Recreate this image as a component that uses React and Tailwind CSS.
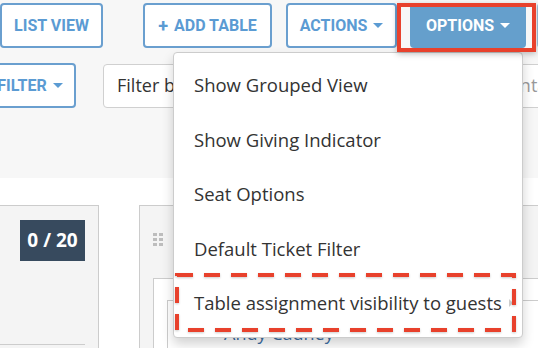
import React from 'react';

const Caret = ({ className = '' }) => (
  <span className={`inline-block w-0 h-0 border-x-[5px] border-x-transparent border-t-[5px] ${className}`} />
);

const OutlineButton = ({ children, className = '' }) => (
  <button
    className={`h-[45px] shrink-0 flex items-center justify-center gap-[6px] rounded-[4px] border-2 border-[#6a9fcf] bg-white text-[16px] font-bold text-[#5b9bd3] ${className}`}
    style={{ fontFamily: 'Roboto, "Liberation Sans", sans-serif' }}
  >
    {children}
  </button>
);

const menuItems = [
  'Show Grouped View',
  'Show Giving Indicator',
  'Seat Options',
  'Default Ticket Filter',
  'Table assignment visibility to guests',
];

export default function App() {
  return (
    <div
      className="relative w-[538px] h-[348px] overflow-hidden bg-white"
      style={{ fontFamily: '"Open Sans", "Liberation Sans", sans-serif' }}
    >
      {/* toolbar area */}
      <div className="h-[178px] bg-[#f7f7f7] pt-[3px]">
        <div className="flex items-center">
          <OutlineButton className="w-[103px]">LIST VIEW</OutlineButton>
          <OutlineButton className="w-[129px] ml-[40px]">
            <span className="text-[18px] leading-none">+</span>ADD TABLE
          </OutlineButton>
          <OutlineButton className="w-[111px] ml-[14px]">
            ACTIONS <Caret className="border-t-[#5b9bd3]" />
          </OutlineButton>
          <button
            className="h-[45px] w-[116px] ml-[13px] shrink-0 flex items-center justify-center gap-[6px] rounded-[4px] bg-[#659fcc] text-[16px] font-bold text-white"
            style={{ fontFamily: 'Roboto, "Liberation Sans", sans-serif' }}
          >
            OPTIONS <Caret className="border-t-white" />
          </button>
          <div className="h-[45px] w-[20px] ml-[11px] shrink-0 rounded-[4px] border-2 border-[#9fbfdc] bg-white" />
        </div>

        <div className="flex items-center mt-[15px]">
          <OutlineButton className="w-[92px] -ml-[16px]">
            FILTER <Caret className="border-t-[#5b9bd3]" />
          </OutlineButton>
          <div className="h-[44px] w-[311px] ml-[27px] shrink-0 flex items-center pl-[13px] rounded-[4px] border border-[#d0d0d0] bg-white text-[18px] text-[#333]">
            Filter by Table
          </div>
          <div className="h-[44px] w-[200px] ml-[8px] shrink-0 flex items-center pl-[13px] rounded-[4px] border border-[#d0d0d0] bg-white text-[18px] text-[#999] whitespace-nowrap">
            Search Contacts
          </div>
        </div>
      </div>

      {/* table cards */}
      <div className="flex items-start mt-[27px]">
        <div className="w-[100px] h-[160px] -ml-px shrink-0 border border-[#cccccc] bg-[#f4f4f4] pt-[14px]">
          <div className="ml-[20px] w-[65px] h-[41px] flex items-center justify-center bg-[#374a5e] text-white text-[19px] font-bold">
            0 / 20
          </div>
          <div className="mt-[83px] w-[85px] border-t border-[#cccccc]" />
        </div>

        <div className="ml-[40px] w-[420px] h-[160px] shrink-0 border border-[#cccccc] bg-[#f4f4f4] pl-[13px] pt-[27px]">
          <div className="grid grid-cols-2 gap-[2px] w-[10px]">
            {[0, 1, 2, 3, 4, 5].map((i) => (
              <span key={i} className="w-[4px] h-[3px] bg-[#bdbdbd]" />
            ))}
          </div>
          <div className="mt-[32px] h-[100px] border border-[#cccccc] bg-white pl-[13px] pt-[21px]">
            <div className="h-[80px] border border-[#cccccc] bg-white pl-[56px] pt-[19px] text-[18px] text-[#3d6ea3]">
              Andy Cadney
            </div>
          </div>
        </div>
      </div>

      {/* dropdown menu */}
      <div className="absolute left-[173px] top-[52px] w-[350px] h-[286px] rounded-[4px] border border-[#cccccc] bg-white pt-[5px] shadow-[0_6px_12px_rgba(0,0,0,0.18)]">
        {menuItems.map((label, i) => (
          <div
            key={label}
            className="relative h-[54.5px] flex items-center pl-[20px] text-[18.5px] text-[#333] whitespace-nowrap"
          >
            {label}
            {i === menuItems.length - 1 && (
              <span className="absolute right-[9px] top-1/2 -translate-y-1/2 w-0 h-0 border-y-[4px] border-y-transparent border-l-[4px] border-l-[#cccccc]" />
            )}
          </div>
        ))}
      </div>

      {/* annotation: options button */}
      <div className="absolute left-[397px] top-[3px] w-[139px] h-[49px] border-4 border-[#e8412c] shadow-[0_2px_6px_rgba(0,0,0,0.25)]" />

      {/* annotation: dashed highlight */}
      <svg
        className="absolute left-[175px] top-[273px]"
        width="341"
        height="59"
        viewBox="0 0 341 59"
        style={{ filter: 'drop-shadow(0 1px 1px rgba(0,0,0,0.2))' }}
      >
        <rect
          x="2"
          y="2"
          width="337"
          height="55"
          fill="none"
          stroke="#e8412c"
          strokeWidth="4"
          strokeDasharray="16 11"
        />
      </svg>
    </div>
  );
}
